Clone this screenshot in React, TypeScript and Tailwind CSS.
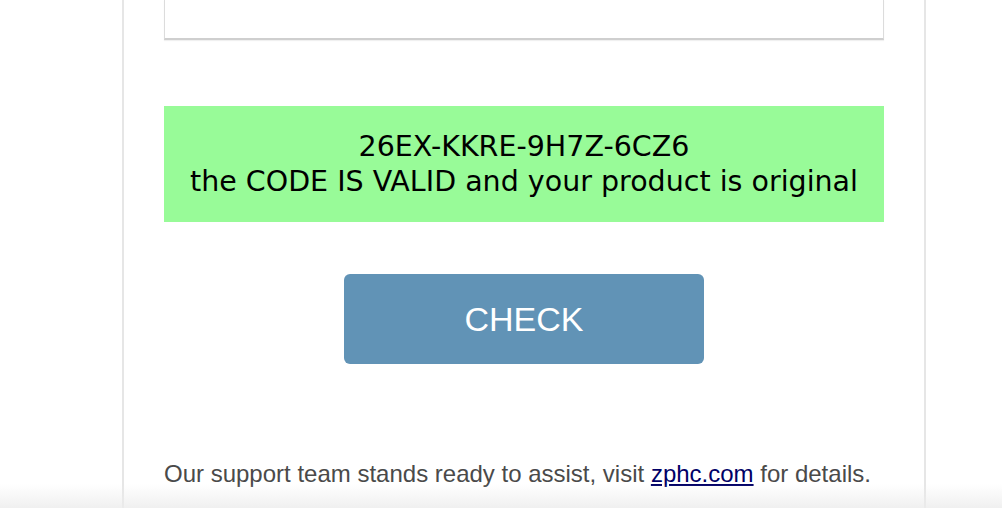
export default function App() {
  return (
    <div className="relative h-[508px] overflow-hidden bg-white">
      <div className="ml-[122px] h-full w-[804px] border-x-2 border-[#e6e6e6] px-[40px]">
        {/* code input, scrolled mostly out of view */}
        <div className="h-[40px] border-x border-b-2 border-[#dcdcdc] border-b-[#cfcfcf] bg-white shadow-[0_1px_1px_rgba(0,0,0,0.06)]" />

        {/* result */}
        <div
          className="mt-[66px] bg-[#98fb98] py-[23px] text-center text-[28.5px] leading-[35px] text-black"
          style={{ fontFamily: '"DejaVu Sans", Tahoma, sans-serif' }}
        >
          <div>26EX-KKRE-9H7Z-6CZ6</div>
          <div>the CODE IS VALID and your product is original</div>
        </div>

        <div className="mt-[52px] flex justify-center">
          <button
            className="h-[90px] w-[360px] rounded-[6px] bg-[#6193b6] text-[34px] text-white"
            style={{ fontFamily: '"Liberation Sans", Arial, sans-serif' }}
          >
            CHECK
          </button>
        </div>

        <p
          className="mt-[95px] text-[24px] leading-[30px] text-[#4a4a4a]"
          style={{ fontFamily: '"Liberation Sans", Arial, sans-serif' }}
        >
          Our support team stands ready to assist, visit{" "}
          <a href="#" className="text-[#000066] underline">
            zphc.com
          </a>{" "}
          for details.
        </p>
      </div>

      {/* bottom fade */}
      <div className="pointer-events-none absolute inset-x-0 bottom-0 h-[24px] bg-gradient-to-b from-white/0 to-[#ececec]/80" />
    </div>
  );
}
